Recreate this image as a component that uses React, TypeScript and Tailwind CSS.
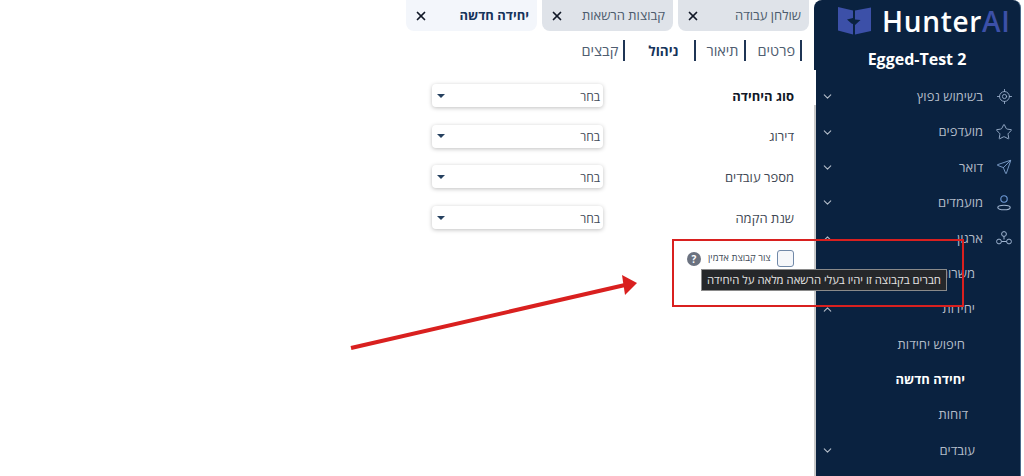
import React from "react";
import { ChevronDown, ChevronUp, X, LocateFixed, Star, Send } from "lucide-react";

const font = { fontFamily: '"Open Sans","Liberation Sans",sans-serif' };

function Tab({ label, active }: { label: string; active?: boolean }) {
  return (
    <div className={`flex h-[31px] w-[131px] items-center justify-between rounded-b-lg pl-[8px] pr-2 ${active ? "bg-[#f3f6fb] font-bold text-[#16335a]" : "bg-[#dfe3e9] text-[#4b5a6c]"}`}>
      <X size={14} strokeWidth={3} className="text-[#111827]" />
      <span className="text-[13px]" dir="rtl">{label}</span>
    </div>
  );
}

function Field({ label, bold }: { label: string; bold?: boolean }) {
  return (
    <div className="flex h-[23px] items-center">
      <div className="flex h-[23px] w-[171px] items-center justify-between rounded bg-white pl-[5px] pr-[3px] shadow-[0_1px_4px_rgba(0,0,0,0.25)]">
        <span className="h-0 w-0 border-x-[4px] border-t-[4px] border-x-transparent border-t-[#25405f]" />
        <span className="pt-[2px] text-[12px] text-[#414b57]" dir="rtl">בחר</span>
      </div>
      <div className={`flex-1 pt-[2px] text-right text-[13px] ${bold ? "font-bold text-[#111827]" : "text-[#3f4854]"}`} dir="rtl">{label}</div>
    </div>
  );
}

function Nav({ label, icon, open }: { label: string; icon: React.ReactNode; open?: boolean }) {
  return (
    <div className="flex h-[35.4px] items-center pl-[7px] pr-[7px] text-[#b3bcc8]">
      {open ? <ChevronUp size={13} /> : <ChevronDown size={13} />}
      <span className="ml-auto text-[13px]" dir="rtl">{label}</span>
      <span className="ml-[12px] flex w-[18px] justify-center">{icon}</span>
    </div>
  );
}

function Sub({ label, pr, bold, chev, up }: { label: string; pr: string; bold?: boolean; chev?: boolean; up?: boolean }) {
  return (
    <div className={`flex h-[35.4px] items-center pl-[7px] ${pr} ${bold ? "font-bold text-white" : "text-[#b3bcc8]"}`}>
      {chev && <ChevronDown size={13} />}
      {up && <ChevronUp size={13} />}
      <span className="ml-auto text-[13px]" dir="rtl">{label}</span>
    </div>
  );
}

function UserIcon() {
  return (
    <svg width="18" height="18" viewBox="0 0 18 18" fill="none" stroke="#6f9bd8" strokeWidth="1.1">
      <circle cx="9" cy="5" r="3.2" />
      <ellipse cx="9" cy="13.5" rx="6.2" ry="2.3" stroke="#9fb4d0" />
    </svg>
  );
}

function OrgIcon() {
  return (
    <svg width="16" height="16" viewBox="0 0 16 16" fill="none" stroke="#9fb4d0" strokeWidth="1">
      <circle cx="8" cy="4" r="2.4" />
      <circle cx="3" cy="11.5" r="2.4" />
      <circle cx="13" cy="11.5" r="2.4" />
      <path d="M8 6.4V9.5M5.4 11.5H10.6" />
    </svg>
  );
}

export default function App() {
  return (
    <div className="relative flex h-[476px] w-[1024px] overflow-hidden bg-white" style={font}>
      <main className="h-full w-[814px] pl-[406px] pr-[5px]">
        <div className="flex w-[403px] gap-[5px]">
          <Tab label="יחידה חדשה" active />
          <Tab label="קבוצות הרשאות" />
          <Tab label="שולחן עבודה" />
        </div>
        <div className="mt-[9px] flex h-[21px] w-[396px] items-center text-[14.5px] leading-none text-[#4f5d70]" dir="rtl">
          <span className="flex h-[21px] items-center border-r-2 border-[#1f3555] pr-[5px] pt-[2px]">פרטים</span>
          <span className="mr-[12px] flex h-[21px] items-center border-r-2 border-[#1f3555] pr-[5px] pt-[2px]">תיאור</span>
          <span className="mr-[10px] flex h-[21px] items-center border-r-2 border-[#1f3555] pr-[16px] pt-[2px] text-[13.5px] font-bold text-[#16335a]">ניהול</span>
          <span className="mr-[23px] flex h-[21px] items-center border-r-2 border-[#1f3555] pr-[5px] pt-[2px]">קבצים</span>
        </div>
        <div className="ml-[26px] mt-[23px] flex w-[362px] flex-col gap-[17.7px]">
          <Field label="סוג היחידה" bold />
          <Field label="דירוג" />
          <Field label="מספר עובדים" />
          <Field label="שנת הקמה" />
        </div>
        <div className="ml-[281px] mt-[21px] flex w-[107px] items-center">
          <span className="flex h-[14px] w-[14px] items-center justify-center rounded-full bg-[#6b7280] text-[10px] leading-none font-bold text-white">?</span>
          <span className="ml-[7px] whitespace-nowrap text-[9.5px] text-[#414b57]" dir="rtl">צור קבוצת אדמין</span>
          <span className="ml-auto h-[17px] w-[17px] rounded-[3px] border border-[#7189a8] bg-[#f5f7fa]" />
        </div>
      </main>
      <aside className="flex h-full w-[207px] flex-col rounded-t-lg border-r border-[#4a6a8a] bg-[#0a2240]">
        <div className="flex h-[40px] items-center gap-[10px] pl-[24px] pt-[2px]">
          <svg width="34" height="28" viewBox="0 0 34 28">
            <path d="M0 0L15 3.5L15 11L9 12.5L13.5 16.5L15 17V27.5L0 23.5Z" fill="#3c50a8" />
            <path d="M17 3.5L33 0.5V24L17 27.5V18L22.5 13L17 12.5Z" fill="#3c50a8" />
          </svg>
          <span className="text-[28px] leading-none font-semibold tracking-[0.7px] text-white">Hunter<span className="text-[#3c50a8]">AI</span></span>
        </div>
        <div className="mt-[7px] text-center text-[16px] font-bold text-white">Egged-Test 2</div>
        <div className="mt-[8px]">
          <Nav label="בשימוש נפוץ" icon={<LocateFixed size={17} strokeWidth={1.2} className="text-[#9fb4d0]" />} />
          <Nav label="מועדפים" icon={<Star size={18} strokeWidth={1.2} className="text-[#9fb4d0]" />} />
          <Nav label="דואר" icon={<Send size={16} strokeWidth={1.2} className="text-[#8fb2e0]" />} />
          <Nav label="מועמדים" icon={<UserIcon />} />
          <Nav label="ארגון" icon={<OrgIcon />} open />
          <Sub label="משרות" pr="pr-[45px]" />
          <Sub label="יחידות" pr="pr-[45px]" up />
          <Sub label="חיפוש יחידות" pr="pr-[55px]" />
          <Sub label="יחידה חדשה" pr="pr-[55px]" bold />
          <Sub label="דוחות" pr="pr-[52px]" />
          <Sub label="עובדים" pr="pr-[45px]" chev />
        </div>
      </aside>
      <div className="absolute left-[814px] top-[70px] h-[35px] w-[2px] bg-white" />
      <div className="absolute left-[814px] top-[105px] h-[371px] w-[2px] bg-[#c9c9c9]" />
      <div className="absolute left-[701px] top-[269px] whitespace-nowrap border border-[#8a8a8a] bg-[#25272a] px-[5px] py-[2px] text-[11.3px] leading-[16px] text-[#e5e5e5]" dir="rtl">חברים בקבוצה זו יהיו בעלי הרשאה מלאה על היחידה</div>
      <div className="absolute left-[672px] top-[239px] h-[68px] w-[292px] border-2 border-[#d9201f]" />
      <svg className="absolute left-[340px] top-[270px]" width="310" height="90" viewBox="0 0 310 90">
        <path d="M11 78L285 15" stroke="#d9201f" strokeWidth="4" />
        <path d="M282 5L297 13L285 25Z" fill="#d9201f" />
      </svg>
    </div>
  );
}
